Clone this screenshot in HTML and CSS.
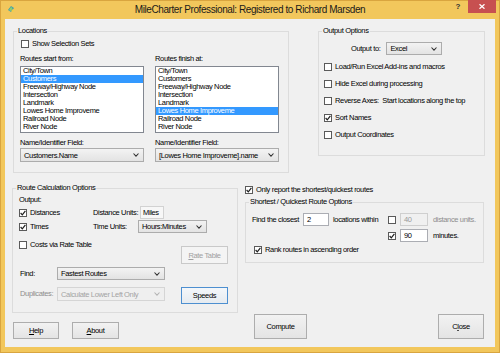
FILE: index.html
```html
<!DOCTYPE html>
<html lang="en">
<head>
    <meta charset="UTF-8">
    <title>MileCharter Professional</title>
    <link rel="stylesheet" href="styles.css">
</head>
<body>
<div class="window">
    <div class="titlebar">
        <svg class="app-icon" viewBox="0 0 8 8">
            <path d="M1 5 L4 1 L7 3 L4 7 Z" fill="#3d9fb0"/>
            <path d="M2 5 L4 2 L5.5 3 L3.5 6 Z" fill="#8fd16a"/>
            <rect x="4.5" y="4.5" width="2" height="2" fill="#f3d23a"/>
        </svg>
        <div class="title">MileCharter Professional: Registered to Richard Marsden</div>
        <div class="caption-btns">
            <span class="help-btn">?</span>
            <span class="close-btn">
                <svg viewBox="0 0 6 5"><path d="M0.5 0.3 L5.5 4.7 M5.5 0.3 L0.5 4.7" stroke="#fff" stroke-width="1.3"/></svg>
            </span>
        </div>
    </div>

    <div class="client">
        <div class="top-row">
            <fieldset class="group locations">
                <legend>Locations</legend>
                <label class="check sel-sets"><span class="box"></span>Show Selection Sets</label>
                <div class="loc-cols">
                    <div class="loc-col">
                        <div class="field-label">Routes start from:</div>
                        <ul class="listbox">
                            <li>City/Town</li>
                            <li class="sel">Customers</li>
                            <li>Freeway/Highway Node</li>
                            <li>Intersection</li>
                            <li>Landmark</li>
                            <li>Lowes Home Improveme</li>
                            <li>Railroad Node</li>
                            <li>River Node</li>
                        </ul>
                        <div class="field-label name-label">Name/Identifier Field:</div>
                        <div class="combo">Customers.Name<svg class="chev" viewBox="0 0 6 4"><path d="M0.5 0.5 L3 3.2 L5.5 0.5"/></svg></div>
                    </div>
                    <div class="loc-col">
                        <div class="field-label">Routes finish at:</div>
                        <ul class="listbox">
                            <li>City/Town</li>
                            <li>Customers</li>
                            <li>Freeway/Highway Node</li>
                            <li>Intersection</li>
                            <li>Landmark</li>
                            <li class="sel">Lowes Home Improveme</li>
                            <li>Railroad Node</li>
                            <li>River Node</li>
                        </ul>
                        <div class="field-label name-label">Name/Identifier Field:</div>
                        <div class="combo">[Lowes Home Improveme].name<svg class="chev" viewBox="0 0 6 4"><path d="M0.5 0.5 L3 3.2 L5.5 0.5"/></svg></div>
                    </div>
                </div>
            </fieldset>

            <fieldset class="group output">
                <legend>Output Options</legend>
                <div class="output-to">
                    <span>Output to:</span>
                    <div class="combo excel">Excel<svg class="chev" viewBox="0 0 6 4"><path d="M0.5 0.5 L3 3.2 L5.5 0.5"/></svg></div>
                </div>
                <label class="check"><span class="box"></span>Load/Run Excel Add-ins and macros</label>
                <label class="check"><span class="box"></span>Hide Excel during processing</label>
                <label class="check"><span class="box"></span>Reverse Axes:&nbsp; Start locations along the top</label>
                <label class="check"><span class="box"><svg viewBox="0 0 6 6"><path d="M0.6 3 L2.3 4.8 L5.4 0.8"/></svg></span>Sort Names</label>
                <label class="check"><span class="box"></span>Output Coordinates</label>
            </fieldset>
        </div>

        <div class="bottom-row">
            <div class="left-col">
                <fieldset class="group calc">
                    <legend>Route Calculation Options</legend>
                    <div class="calc-label">Output:</div>
                    <div class="units-row">
                        <label class="check"><span class="box"><svg viewBox="0 0 6 6"><path d="M0.6 3 L2.3 4.8 L5.4 0.8"/></svg></span>Distances</label>
                        <span>Distance Units:</span>
                        <span class="miles">Miles</span>
                    </div>
                    <div class="units-row">
                        <label class="check"><span class="box"><svg viewBox="0 0 6 6"><path d="M0.6 3 L2.3 4.8 L5.4 0.8"/></svg></span>Times</label>
                        <span>Time Units:</span>
                        <div class="combo time-combo">Hours:Minutes<svg class="chev" viewBox="0 0 6 4"><path d="M0.5 0.5 L3 3.2 L5.5 0.5"/></svg></div>
                    </div>
                    <div class="cost-row">
                        <label class="check"><span class="box"></span>Costs via Rate Table</label>
                        <button class="btn off rate-btn"><u>R</u>ate Table</button>
                    </div>
                    <div class="find-row">
                        <span class="find-label">Find:</span>
                        <div class="combo find-combo">Fastest Routes<svg class="chev" viewBox="0 0 6 4"><path d="M0.5 0.5 L3 3.2 L5.5 0.5"/></svg></div>
                    </div>
                    <div class="find-row dup-row">
                        <span class="find-label off-text">Duplicates:</span>
                        <div class="combo off find-combo">Calculate Lower Left Only<svg class="chev" viewBox="0 0 6 4"><path d="M0.5 0.5 L3 3.2 L5.5 0.5"/></svg></div>
                        <button class="btn speeds">Speeds</button>
                    </div>
                </fieldset>
                <div class="left-btns">
                    <button class="btn help"><u>H</u>elp</button>
                    <button class="btn about"><u>A</u>bout</button>
                </div>
            </div>

            <div class="right-col">
                <label class="check only-row"><span class="box"><svg viewBox="0 0 6 6"><path d="M0.6 3 L2.3 4.8 L5.4 0.8"/></svg></span>Only report the shortest/quickest routes</label>
                <fieldset class="group shortest">
                    <legend>Shortest / Quickest Route Options</legend>
                    <div class="closest-grid">
                        <span>Find the closest</span>
                        <span class="edit n-closest">2</span>
                        <span>locations within</span>
                        <span class="box"></span>
                        <span class="edit off">40</span>
                        <span class="off-text">distance units.</span>
                        <span class="box r2"><svg viewBox="0 0 6 6"><path d="M0.6 3 L2.3 4.8 L5.4 0.8"/></svg></span>
                        <span class="edit">90</span>
                        <span>minutes.</span>
                    </div>
                    <label class="check rank-row"><span class="box"><svg viewBox="0 0 6 6"><path d="M0.6 3 L2.3 4.8 L5.4 0.8"/></svg></span>Rank routes in ascending order</label>
                </fieldset>
                <div class="right-btns">
                    <button class="btn compute">Compute</button>
                    <button class="btn close">C<u>l</u>ose</button>
                </div>
            </div>
        </div>
    </div>
</div>
</body>
</html>
```

FILE: styles.css
```css
* {
    box-sizing: border-box;
}

html, body {
    margin: 0;
}

body {
    font-family: "Liberation Sans", Arial, sans-serif;
    font-size: 7.5px;
    letter-spacing: -0.35px;
    color: #000;
    background: #f2c75c;
}

/* window frame */
.window {
    width: 500px;
    height: 353px;
    background: #f2c75c;
    box-shadow: inset 0 0 0 1px #d9a53f;
    display: flex;
    flex-direction: column;
}

.titlebar {
    height: 19px;
    display: grid;
    grid-template-columns: 1fr auto 1fr;
    align-items: start;
}

.app-icon {
    width: 8px;
    height: 8px;
    margin: 5px 0 0 7px;
}

.title {
    font-size: 10px;
    letter-spacing: -0.42px;
    line-height: 20px;
    color: #1a1a1a;
    white-space: nowrap;
}

.caption-btns {
    justify-self: end;
    display: flex;
    margin-right: 4px;
}

.help-btn {
    width: 20px;
    height: 13px;
    line-height: 13px;
    text-align: center;
    font-weight: bold;
    font-size: 8px;
    letter-spacing: 0;
    color: #333;
}

.close-btn {
    width: 28px;
    height: 13px;
    background: #c75050;
    display: flex;
    align-items: center;
    justify-content: center;
}

.close-btn svg {
    width: 6px;
    height: 5px;
}

.client {
    flex: 1;
    margin: 0 5px 6px;
    background: #f0f0f0;
}

/* group boxes */
.group {
    margin: 0;
    padding: 0;
    border: 1px solid #dcdcdc;
    min-width: 0;
}

.group legend {
    padding: 0 1px;
    margin-left: 3px;
    line-height: 10px;
}

/* checkboxes */
.check {
    display: flex;
    align-items: center;
    gap: 3px;
    height: 10px;
    line-height: 10px;
    white-space: nowrap;
}

.box {
    width: 8px;
    height: 8px;
    flex: none;
    border: 1px solid #5a5a5a;
    background: #fff;
    display: flex;
    align-items: center;
    justify-content: center;
}

.box svg {
    width: 6px;
    height: 6px;
    fill: none;
    stroke: #1e1e1e;
    stroke-width: 1.2;
}

/* controls */
.combo {
    display: flex;
    align-items: center;
    justify-content: space-between;
    height: 14px;
    padding: 0 4px 0 3px;
    border: 1px solid #acacac;
    background: linear-gradient(#f3f3f3, #e3e3e3);
    white-space: nowrap;
    overflow: hidden;
}

.combo.off {
    border-color: #d5d5d5;
    background: #efefef;
    color: #a3a3a3;
}

.chev {
    width: 6px;
    height: 4px;
    flex: none;
    margin-left: 3px;
    fill: none;
    stroke: #333;
    stroke-width: 1.1;
}

.combo.off .chev {
    stroke: #b5b5b5;
}

.edit {
    height: 13px;
    line-height: 11px;
    padding: 0 3px;
    border: 1px solid #abadb3;
    background: #fff;
}

.edit.off {
    border-color: #cfcfcf;
    background: #f0f0f0;
    color: #9a9a9a;
}

.off-text {
    color: #8d8d8d;
}

.btn {
    font: inherit;
    letter-spacing: inherit;
    color: #000;
    height: 17px;
    padding: 0;
    border: 1px solid #adadad;
    background: linear-gradient(#f2f2f2, #e4e4e4);
}

.btn.off {
    border-color: #c9c9c9;
    background: #f4f4f4;
    color: #a0a0a0;
}

/* layout */
.top-row {
    display: flex;
    align-items: flex-start;
    padding: 7px 0 0 8px;
}

.locations {
    width: 276px;
    height: 147px;
}

.sel-sets {
    margin: 3px 0 0 7px;
}

.loc-cols {
    display: grid;
    grid-template-columns: 124px 124px;
    column-gap: 11px;
    margin: 5px 0 0 6px;
}

.field-label {
    line-height: 10px;
    white-space: nowrap;
}

.name-label {
    margin-top: 5px;
}

.listbox {
    margin: 2px 0 0;
    padding: 0;
    list-style: none;
    height: 67px;
    border: 1px solid #828790;
    background: #fff;
    overflow: hidden;
}

.listbox li {
    height: 8px;
    line-height: 8px;
    padding-left: 2px;
    white-space: nowrap;
}

.listbox li.sel {
    background: #3399ff;
    color: #fff;
}

.output {
    width: 167px;
    height: 130px;
    margin-left: 29px;
}

.output-to {
    display: flex;
    align-items: center;
    gap: 6px;
    margin: 6px 0 1px 32px;
}

.excel {
    width: 56px;
    height: 13px;
}

.output .check {
    margin: 7px 0 0 5px;
}

.bottom-row {
    display: flex;
    align-items: flex-start;
    margin-top: 10px;
    padding-left: 7px;
}

.left-col {
    width: 226px;
}

.calc {
    height: 130px;
}

.calc-label {
    line-height: 10px;
    margin: 2px 0 0 6px;
}

.units-row {
    display: grid;
    grid-template-columns: 74px 45px auto;
    align-items: center;
    height: 13px;
    margin: 1px 0 0 6px;
    white-space: nowrap;
}

.miles {
    width: 24px;
    height: 13px;
    line-height: 11px;
    margin-left: 2px;
    padding-left: 2px;
    border: 1px solid #d2d2d2;
    background: #f7f7f7;
}

.time-combo {
    width: 69px;
    height: 13px;
}

.cost-row {
    display: flex;
    align-items: flex-start;
    margin: 7px 9px 0 6px;
}

.rate-btn {
    width: 47px;
    height: 18px;
    margin: 6px 0 0 auto;
}

.find-row {
    display: flex;
    align-items: center;
    margin: 3px 0 0 7px;
    white-space: nowrap;
}

.find-label {
    width: 37px;
    line-height: 13px;
}

.find-combo {
    width: 108px;
    height: 13px;
}

.dup-row {
    align-items: flex-start;
    margin-top: 7px;
}

.dup-row .find-combo {
    height: 14px;
}

.speeds {
    width: 47px;
    margin-left: 16px;
    border-color: #4d8fd0;
    background: linear-gradient(#f4f7fa, #e6ebf0);
}

.left-btns {
    display: flex;
    margin-top: 9px;
}

.help {
    width: 46px;
    margin-left: 1px;
}

.about {
    width: 47px;
    margin-left: 13px;
}

.right-col {
    width: 239px;
    margin-left: 7px;
}

.only-row {
    margin-top: 2px;
}

.shortest {
    height: 66px;
    margin-top: 2px;
}

.closest-grid {
    display: grid;
    grid-template-columns: 51px 30px 55px 12px 33px auto;
    grid-auto-rows: 13px;
    row-gap: 3px;
    align-items: center;
    margin: 6px 0 0 6px;
    white-space: nowrap;
}

.closest-grid .edit {
    width: 28px;
}

.closest-grid .n-closest {
    width: 26px;
}

.closest-grid .r2 {
    grid-column: 4;
}

.rank-row {
    margin: 3px 0 0 8px;
}

.right-btns {
    display: flex;
    justify-content: space-between;
    margin-top: 51px;
    padding-left: 9px;
}

.compute {
    width: 53px;
    height: 25px;
}

.close {
    width: 46px;
    height: 25px;
}
```
